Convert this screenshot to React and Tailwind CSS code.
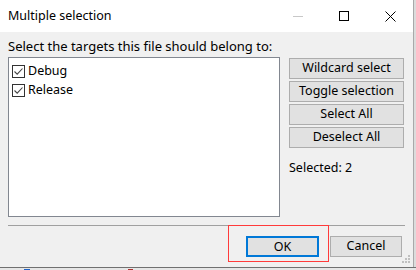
import React, { useState } from 'react';

const targets = ['Debug', 'Release'];
const actions = ['Wildcard select', 'Toggle selection', 'Select All', 'Deselect All'];

function CheckBox({ checked }) {
  return (
    <span className="flex h-[13px] w-[13px] items-center justify-center border border-[#333] bg-white">
      {checked && (
        <svg width="11" height="11" viewBox="0 0 11 11">
          <path d="M1.5 5.5 L4.2 8.2 L9.5 2.5" fill="none" stroke="#444" strokeWidth="1.1" />
        </svg>
      )}
    </span>
  );
}

function App() {
  const [checked, setChecked] = useState({ Debug: true, Release: true });
  const count = Object.values(checked).filter(Boolean).length;

  return (
    <div
      className="relative h-[270px] w-[416px] overflow-hidden bg-[#dcdcdc] text-[12px] text-black"
      style={{ fontFamily: '"Noto Sans", "Liberation Sans", sans-serif' }}
    >
      <div className="relative flex h-[267px] w-[414px] flex-col border-r border-[#a9a9a9] bg-[#f0f0f0]">
        {/* title bar */}
        <div className="flex h-[32px] shrink-0 items-center bg-white pl-[8px]">
          <span className="flex-1 text-[12.5px]">Multiple selection</span>
          <div className="flex h-full items-center">
            <span className="flex w-[46px] justify-center">
              <span className="h-px w-[10px] bg-[#c8c8c8]" />
            </span>
            <span className="flex w-[46px] justify-center">
              <span className="h-[10px] w-[10px] border border-black" />
            </span>
            <span className="flex w-[46px] justify-center">
              <svg width="11" height="11" viewBox="0 0 11 11">
                <path d="M0.5 0.5 L10.5 10.5 M10.5 0.5 L0.5 10.5" stroke="#000" strokeWidth="1" />
              </svg>
            </span>
          </div>
        </div>

        <div className="px-[8px] pt-[5px]">
          <div className="text-[13px] leading-[18px]">Select the targets this file should belong to:</div>
          <div className="mt-[2px] flex">
            <div className="h-[160px] w-[272px] border border-[#828790] bg-white px-[2px] pt-[4px]">
              {targets.map((t) => (
                <label
                  key={t}
                  className="flex h-[19px] items-center gap-[3px] pl-[1px]"
                  onClick={() => setChecked({ ...checked, [t]: !checked[t] })}
                >
                  <CheckBox checked={checked[t]} />
                  <span className="text-[12.5px]">{t}</span>
                </label>
              ))}
            </div>
            <div className="ml-[9px] flex flex-col pt-[1px]">
              <div className="flex flex-col gap-[2px]">
                {actions.map((a) => (
                  <button
                    key={a}
                    className="h-[21px] w-[115px] border border-[#adadad] bg-[#e1e1e1] text-[12.5px] leading-none"
                  >
                    {a}
                  </button>
                ))}
              </div>
              <div className="mt-[11px] text-[12.5px]">Selected: {count}</div>
            </div>
          </div>
          <div className="mt-[8px] h-[2px] w-[397px] border-t border-[#a0a0a0] border-b-white" />
          <div className="mt-[9px] flex justify-end gap-[11px] pr-[3px]">
            <button className="h-[21px] w-[73px] border-2 border-[#0078d7] bg-[#e1e1e1] text-[12.5px]">OK</button>
            <button className="h-[21px] w-[72px] border border-[#adadad] bg-[#e1e1e1] text-[12.5px]">Cancel</button>
          </div>
        </div>

        {/* size grip */}
        <div className="absolute bottom-[4px] right-[3px] leading-none">
          <svg width="8" height="8" viewBox="0 0 8 8" className="block">
            <rect x="6" y="0" width="2" height="2" fill="#c0c0c0" />
            <rect x="3" y="3" width="2" height="2" fill="#c0c0c0" />
            <rect x="6" y="3" width="2" height="2" fill="#c0c0c0" />
            <rect x="0" y="6" width="2" height="2" fill="#c0c0c0" />
            <rect x="3" y="6" width="2" height="2" fill="#c0c0c0" />
            <rect x="6" y="6" width="2" height="2" fill="#c0c0c0" />
          </svg>
        </div>
      </div>

      {/* taskbar strip below the dialog */}
      <div className="flex h-[3px] border-t border-[#707070] bg-[#e6e6e6]">
        <span className="ml-[24px] mt-[1px] h-[2px] w-[6px] bg-[#1e63c9]" />
        <span className="ml-[98px] mt-[1px] h-[2px] w-[5px] bg-[#b03030]" />
      </div>

      {/* annotation highlight */}
      <div className="absolute left-[228px] top-[225px] h-[37px] w-[101px] border border-[#ff3b3b]" />
    </div>
  );
}

export default App;
